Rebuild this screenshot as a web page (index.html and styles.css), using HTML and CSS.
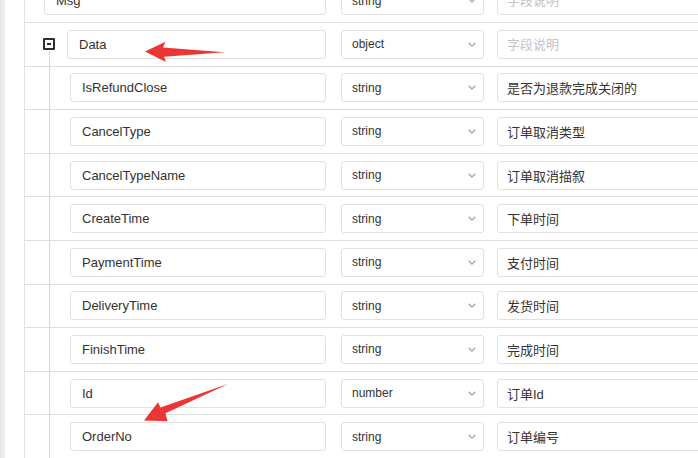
FILE: index.html
```html
<!DOCTYPE html>
<html>
<head>
  <title>Schema Editor</title>
  <link rel="stylesheet" href="styles.css">
</head>
<body>
  <div class="page">
    <div class="edge"></div>

    <div class="tree">
      <!-- top level field -->
      <div class="row">
        <div class="name-cell">
          <span class="lead lead-top"></span>
          <input class="field name" value="Msg">
        </div>
        <div class="type"><span>string</span><svg class="chevron" width="8" height="5" viewBox="0 0 8 5"><path d="M0.7 0.7 L4 4 L7.3 0.7"/></svg></div>
        <input class="field desc" placeholder="字段说明">
      </div>

      <div class="group">
        <div class="row">
          <div class="name-cell">
            <span class="lead lead-parent"><span class="toggle"></span></span>
            <input class="field name" value="Data">
          </div>
          <div class="type"><span>object</span><svg class="chevron" width="8" height="5" viewBox="0 0 8 5"><path d="M0.7 0.7 L4 4 L7.3 0.7"/></svg></div>
          <input class="field desc" placeholder="字段说明">
        </div>

        <div class="children" id="children"></div>
      </div>
    </div>

    <!-- annotation arrows -->
    <svg class="arrows" width="698" height="458" viewBox="0 0 698 458">
      <polygon points="145,51.5 165.5,41.8 163,47.6 224.5,52.3 164,56.8 166,62"/>
      <polygon points="144,420.5 158,402.3 160.5,407.6 228.5,383.8 165.5,413.2 167.5,421.3"/>
    </svg>
  </div>

  <script>
    // child fields of Data
    const fields = [
      ['IsRefundClose', 'string', '是否为退款完成关闭的'],
      ['CancelType', 'string', '订单取消类型'],
      ['CancelTypeName', 'string', '订单取消描叙'],
      ['CreateTime', 'string', '下单时间'],
      ['PaymentTime', 'string', '支付时间'],
      ['DeliveryTime', 'string', '发货时间'],
      ['FinishTime', 'string', '完成时间'],
      ['Id', 'number', '订单Id'],
      ['OrderNo', 'string', '订单编号']
    ];

    const chevron = '<svg class="chevron" width="8" height="5" viewBox="0 0 8 5"><path d="M0.7 0.7 L4 4 L7.3 0.7"/></svg>';
    const list = document.getElementById('children');

    fields.forEach(([name, type, desc]) => {
      const row = document.createElement('div');
      row.className = 'row';
      row.innerHTML =
        '<div class="name-cell"><span class="lead lead-child"></span>' +
        '<input class="field name" value="' + name + '"></div>' +
        '<div class="type"><span>' + type + '</span>' + chevron + '</div>' +
        '<input class="field desc" value="' + desc + '">';
      list.appendChild(row);
    });
  </script>
</body>
</html>
```

FILE: styles.css
```css
html, body {
  margin: 0;
  padding: 0;
  background: #fff;
}
body {
  font-family: 'Liberation Sans', Arial, 'Noto Sans CJK SC', sans-serif;
  color: #333;
}
.page {
  position: relative;
  display: flex;
  width: 698px;
  height: 458px;
  overflow: hidden;
}
.edge {
  width: 5px;
  flex: none;
  background: linear-gradient(to right, #e4e4e4, #f2f2f2);
}
.tree {
  margin-left: 19px;
  margin-top: -21.6px;
  border-left: 1px solid #e2e2e2;
  flex: none;
  width: 720px;
}
.row {
  box-sizing: border-box;
  height: 43.6px;
  border-top: 1px solid #dedede;
  display: flex;
  align-items: center;
}
.name-cell {
  width: 301px;
  flex: none;
  display: flex;
  align-items: center;
}
.lead {
  flex: none;
  display: flex;
  align-items: center;
}
.lead-top {
  width: 19px;
}
.lead-parent {
  width: 42px;
  padding-left: 18px;
  box-sizing: border-box;
}
.lead-child {
  width: 45px;
}
.toggle {
  position: relative;
  box-sizing: border-box;
  width: 12px;
  height: 12px;
  border: 2px solid #2e2e2e;
  border-radius: 1px;
}
.toggle::after {
  content: '';
  position: absolute;
  left: 2px;
  top: 3px;
  width: 4px;
  height: 2px;
  background: #2e2e2e;
}
.field {
  box-sizing: border-box;
  height: 29px;
  border: 1px solid #e1e1e1;
  border-radius: 3px;
  padding: 0 11px;
  font-family: inherit;
  font-size: 13px;
  color: #333;
  background: #fff;
  outline: none;
}
.field::placeholder {
  color: #c4c4c4;
}
.name {
  flex: 1;
  min-width: 0;
}
.type {
  box-sizing: border-box;
  width: 143px;
  height: 29px;
  margin-left: 15px;
  padding: 0 7px 0 10px;
  border: 1px solid #e1e1e1;
  border-radius: 3px;
  display: flex;
  align-items: center;
  justify-content: space-between;
  font-size: 12px;
  color: #333;
  flex: none;
}
.chevron path {
  fill: none;
  stroke: #a8a8a8;
  stroke-width: 1.3;
}
.desc {
  width: 212px;
  margin-left: 13px;
  padding: 0 9px;
  flex: none;
}
.children {
  position: relative;
}
.children::before {
  content: '';
  position: absolute;
  left: 24px;
  top: -15px;
  bottom: 0;
  width: 1px;
  background: #d6d6d6;
}
.arrows {
  position: absolute;
  left: 0;
  top: 0;
  pointer-events: none;
}
.arrows polygon {
  fill: #ec3636;
}
```
